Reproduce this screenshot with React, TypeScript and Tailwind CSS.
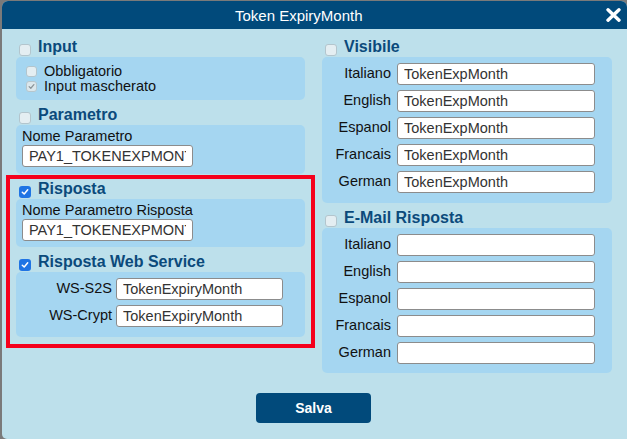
import React from 'react';

type CheckState = 'off' | 'on' | 'disabled';

const Check: React.FC<{ state: CheckState; size?: 'lg' | 'sm' }> = ({ state, size = 'lg' }) => {
  const dim = size === 'lg' ? 'w-[12px] h-[12px]' : 'w-[11px] h-[11px]';
  if (state === 'on') {
    return (
      <span className={`${dim} shrink-0 rounded-[3px] bg-[#1f74e4] flex items-center justify-center`}>
        <svg width="8" height="8" viewBox="0 0 8 8">
          <path d="M1.3 4.2 L3.2 6 L6.7 1.8" fill="none" stroke="#fff" strokeWidth="1.5" strokeLinecap="round" strokeLinejoin="round" />
        </svg>
      </span>
    );
  }
  if (state === 'disabled') {
    return (
      <span className={`${dim} shrink-0 rounded-[3px] bg-[#dbe7ec] border border-[#b6c6cd] flex items-center justify-center`}>
        <svg width="7" height="7" viewBox="0 0 8 8">
          <path d="M1.3 4.2 L3.2 6 L6.7 1.8" fill="none" stroke="#8b9498" strokeWidth="1.4" strokeLinecap="round" strokeLinejoin="round" />
        </svg>
      </span>
    );
  }
  return <span className={`${dim} block shrink-0 rounded-[3px] bg-[#e4eef2] border border-[#b3c5cd]`} />;
};

const SectionTitle: React.FC<{ label: string; state: CheckState }> = ({ label, state }) => (
  <div className="h-[20px] flex items-center pl-[3px]">
    <span className="block mt-[6px]">
      <Check state={state} />
    </span>
    <span className="ml-[7px] text-[16px] font-bold text-[#0b4a7b] leading-none">{label}</span>
  </div>
);

const Field: React.FC<{ value?: string; w: string }> = ({ value = '', w }) => (
  <input
    readOnly
    value={value}
    className={`${w} block h-[22px] shrink-0 bg-white border border-[#8c8c8c] rounded-[3px] px-[6px] text-[14.5px] text-[#333] outline-none`}
    style={{ fontFamily: '"Liberation Sans", Arial, sans-serif' }}
  />
);

const LangRows: React.FC<{ values: string[] }> = ({ values }) => {
  const langs = ['Italiano', 'English', 'Espanol', 'Francais', 'German'];
  return (
    <div className="flex flex-col gap-[5px]">
      {langs.map((l, i) => (
        <div key={l} className="flex items-center">
          <span className="w-[70px] text-right text-[14.5px] text-[#111] pr-[1px] whitespace-nowrap">{l}</span>
          <span className="w-[5px]" />
          <Field value={values[i]} w="w-[198px]" />
        </div>
      ))}
    </div>
  );
};

export default function App() {
  return (
    <div
      className="w-[627px] h-[439px] bg-[#7a7a7a] pl-[2px] pt-px overflow-hidden"
      style={{ fontFamily: '"Liberation Sans", Arial, sans-serif' }}
    >
      <div className="w-[625px] h-[438px] bg-[#bde0eb] rounded-t-[6px] rounded-bl-[5px] overflow-hidden flex flex-col">
        {/* Header */}
        <div className="h-[28px] bg-[#014a7b] flex items-center shrink-0">
          <span className="ml-[233px] text-white text-[15px] leading-none whitespace-nowrap">
            Token ExpiryMonth
          </span>
          <svg className="ml-auto mr-[5px]" width="17" height="14" viewBox="0 0 17 14">
            <path d="M3 1.8 L14 12.2 M14 1.8 L3 12.2" stroke="#fff" strokeWidth="3.4" strokeLinecap="round" />
          </svg>
        </div>

        {/* Body */}
        <div className="pl-[14px] pr-[15px] pt-[8px] grid grid-cols-[289px_290px] gap-x-[17px]">
          {/* Left column */}
          <div className="flex flex-col">
            <SectionTitle label="Input" state="off" />
            <div className="bg-[#a5d6f1] rounded-[5px] pt-[7px] pb-[6px] pl-[10px]">
              <div className="h-[15px] flex items-center">
                <Check state="off" size="sm" />
                <span className="ml-[7px] text-[14.5px] text-[#111] leading-none">Obbligatorio</span>
              </div>
              <div className="h-[15px] flex items-center">
                <Check state="disabled" size="sm" />
                <span className="ml-[7px] text-[14.5px] text-[#111] leading-none">Input mascherato</span>
              </div>
            </div>

            <div className="mt-[5px]">
              <SectionTitle label="Parametro" state="off" />
            </div>
            <div className="bg-[#a5d6f1] rounded-[5px] pt-[4px] pb-[7px] pl-[6px]">
              <div className="h-[15px] text-[14.5px] text-[#111] leading-[15px]">Nome Parametro</div>
              <div className="mt-px">
                <Field value="PAY1_TOKENEXPMONTH" w="w-[171px]" />
              </div>
            </div>

            {/* Highlighted block */}
            <div className="mt-px -mx-[10px] border-4 border-[#f5001c] px-[6px] pb-[7px]">
              <SectionTitle label="Risposta" state="on" />
              <div className="bg-[#a5d6f1] rounded-[5px] pt-[4px] pb-[6px] pl-[6px]">
                <div className="h-[15px] text-[14.5px] text-[#111] leading-[15px]">Nome Parametro Risposta</div>
                <div className="mt-px">
                  <Field value="PAY1_TOKENEXPMONTH" w="w-[171px]" />
                </div>
              </div>

              <div className="mt-[5px]">
                <SectionTitle label="Risposta Web Service" state="on" />
              </div>
              <div className="bg-[#a5d6f1] rounded-[5px] pt-[6px] pb-[10px] flex flex-col gap-[5px]">
                <div className="flex items-center">
                  <span className="w-[100px] text-right text-[14.5px] text-[#111] pr-[4px]">WS-S2S</span>
                  <Field value="TokenExpiryMonth" w="w-[167px]" />
                </div>
                <div className="flex items-center">
                  <span className="w-[100px] text-right text-[14.5px] text-[#111] pr-[4px]">WS-Crypt</span>
                  <Field value="TokenExpiryMonth" w="w-[167px]" />
                </div>
              </div>
            </div>
          </div>

          {/* Right column */}
          <div className="flex flex-col">
            <SectionTitle label="Visibile" state="off" />
            <div className="bg-[#a5d6f1] rounded-[5px] pt-[6px] pb-[10px]">
              <LangRows values={['TokenExpMonth', 'TokenExpMonth', 'TokenExpMonth', 'TokenExpMonth', 'TokenExpMonth']} />
            </div>

            <div className="mt-[5px]">
              <SectionTitle label="E-Mail Risposta" state="off" />
            </div>
            <div className="bg-[#a5d6f1] rounded-[5px] pt-[6px] pb-[9px]">
              <LangRows values={['', '', '', '', '']} />
            </div>
          </div>
        </div>

        {/* Footer */}
        <div className="flex justify-center mt-[20px] pr-[2px]">
          <button className="w-[115px] h-[30px] bg-[#014a7b] rounded-[4px] text-white text-[14px] font-bold">
            Salva
          </button>
        </div>
      </div>
    </div>
  );
}
